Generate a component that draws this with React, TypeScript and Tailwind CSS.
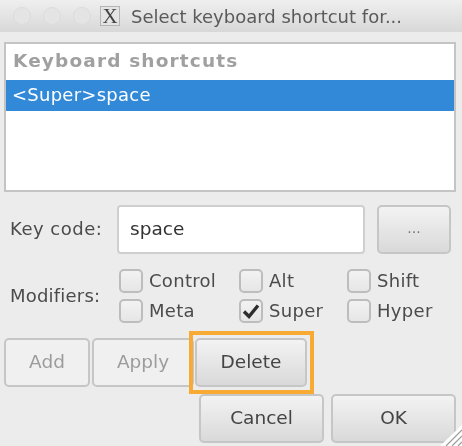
const font = "font-['DejaVu_Sans',sans-serif]";

function Dot() {
  return <span className="h-[18px] w-[18px] rounded-full border border-[#dcdcdc] bg-[#e4e4e4]" />;
}

function Check({ label, checked }: { label: string; checked?: boolean }) {
  return (
    <div className="flex h-[24px] items-center gap-[6px]">
      <span className="flex h-[24px] w-[24px] shrink-0 items-center justify-center rounded-[5px] border-2 border-[#bdbdbd] bg-gradient-to-b from-[#f2f2f2] to-[#e6e6e6]">
        {checked && (
          <svg width="18" height="16" viewBox="0 0 18 16">
            <path d="M2 8.5 L7 13.5 L16 2.5" fill="none" stroke="#2e2e2e" strokeWidth="3.4" />
          </svg>
        )}
      </span>
      <span className="pb-[1px] text-[18px] leading-none tracking-[0.3px] text-[#4b4b4b]">{label}</span>
    </div>
  );
}

function Btn({ label, width, disabled, text }: { label: string; width: string; disabled?: boolean; text?: string }) {
  const cls = disabled
    ? "bg-[#f0f0f0] text-[#9c9c9c]"
    : "bg-gradient-to-b from-[#f3f3f3] to-[#d9d9d9] text-[#444444]";
  return (
    <div className={`flex h-[49px] items-center justify-center rounded-[5px] border-2 border-[#c6c6c6] pb-[2px] ${width} ${cls} ${text ?? "text-[18.5px]"}`}>
      {label}
    </div>
  );
}

export default function App() {
  return (
    <div className={`relative h-[446px] w-[462px] overflow-hidden bg-[#ececec] blur-[0.4px] ${font}`}>
      <div className="flex h-[32px] items-center bg-gradient-to-b from-[#efefef] to-[#d8d8d8] pl-[13px]">
        <div className="flex gap-[12px]">
          <Dot />
          <Dot />
          <Dot />
        </div>
        <div className="ml-[9px] flex h-[20px] w-[20px] items-center justify-center border border-[#b5b5b5] bg-[#e4e4e4] font-['Liberation_Serif',serif] text-[21px] leading-none text-[#444444]">
          X
        </div>
        <span className="ml-[11px] whitespace-nowrap text-[18px] text-[#5a5a5a]">Select keyboard shortcut for...</span>
      </div>

      <div className="ml-[4px] mt-[10px] h-[150px] w-[452px] border-2 border-[#c4c4c4] bg-white">
        <div className="flex h-[34px] items-center pl-[7px] text-[18.5px] font-bold tracking-[1.15px] text-[#a0a0a0]">
          Keyboard shortcuts
        </div>
        <div className="mt-[2px] flex h-[31px] items-center bg-[#3189d8] pb-[2px] pl-[6px] text-[18px] tracking-[0.25px] text-white">
          &lt;Super&gt;space
        </div>
      </div>

      <div className="mt-[13px] flex h-[49px] items-center pl-[10px]">
        <span className="w-[107px] pb-[2px] text-[18px] tracking-[0.5px] text-[#4b4b4b]">Key code:</span>
        <div className="flex h-[49px] w-[248px] items-center rounded-[4px] border-2 border-[#cfcfcf] bg-white pb-[2px] pl-[11px] text-[18.5px] text-[#333333]">
          space
        </div>
        <div className="ml-[12px]">
          <Btn label="..." width="w-[74px]" text="text-[14px] text-[#777777]" />
        </div>
      </div>

      <div className="mt-[15px] flex h-[54px] items-center pl-[10px]">
        <span className="w-[109px] pb-[2px] text-[18px] tracking-[0.2px] text-[#4b4b4b]">Modifiers:</span>
        <div className="grid grid-cols-[120px_108px_auto] gap-y-[6px]">
          <Check label="Control" />
          <Check label="Alt" />
          <Check label="Shift" />
          <Check label="Meta" />
          <Check label="Super" checked />
          <Check label="Hyper" />
        </div>
      </div>

      <div className="mt-[15px] flex pl-[4px]">
        <Btn label="Add" disabled width="w-[86px]" />
        <div className="ml-[2px]">
          <Btn label="Apply" disabled width="w-[102px]" />
        </div>
        <div className="ml-[1px]">
          <Btn label="Delete" width="w-[112px]" />
        </div>
      </div>

      <div className="mt-[7px] flex pl-[199px]">
        <Btn label="Cancel" width="w-[125px]" />
        <div className="ml-[7px]">
          <Btn label="OK" width="w-[125px]" />
        </div>
      </div>

      <div className="absolute left-[189px] top-[331px] h-[63px] w-[125px] border-[4px] border-[#f7ab35]" />

      <svg className="absolute bottom-0 right-0" width="22" height="21" viewBox="0 0 22 21">
        <path d="M0 21 L22 0 V21 Z" fill="#ffffff" />
        <path d="M6 21 L22 5 M12 21 L22 11 M18 21 L22 17" stroke="#9a9a9a" strokeWidth="1.2" />
      </svg>
    </div>
  );
}
